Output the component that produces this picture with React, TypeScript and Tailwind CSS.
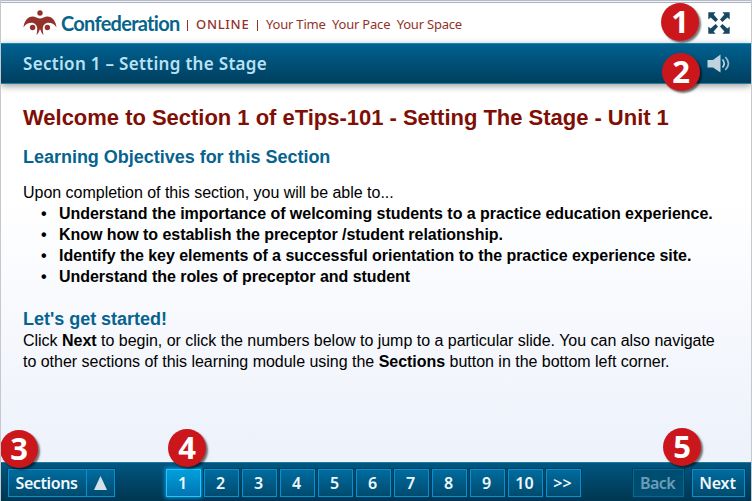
const pages = ["2", "3", "4", "5", "6", "7", "8", "9", "10", ">>"];

const objectives = [
  "Understand the importance of welcoming students to a practice education experience.",
  "Know how to establish the preceptor /student relationship.",
  "Identify the key elements of a successful orientation to the practice experience site.",
  "Understand the roles of preceptor and student",
];

const badges = [
  { label: "1", place: "left-[661px] top-[3px]" },
  { label: "2", place: "left-[662px] top-[53px]" },
  { label: "3", place: "left-0 top-[430px]" },
  { label: "4", place: "left-[168px] top-[429px]" },
  { label: "5", place: "left-[663px] top-[428px]" },
];

function Logo() {
  return (
    <svg width="34" height="26" viewBox="0 0 34 26" fill="#93322b" className="shrink-0">
      <circle cx="17" cy="3" r="2.7" />
      <circle cx="9.6" cy="17.500" r="2.7" />
      <circle cx="24.4" cy="17.500" r="2.7" />
      <path d="M0.5 17.5C1 11 5 6.5 9.500 6.500C12.500 6.500 14.500 8.500 17 8.500C19.500 8.500 21.500 6.500 24.500 6.500C29 6.500 33 11 33.500 17.500C31.500 14 28.500 12.800 25.500 12.800C22 12.800 20 15.500 19.800 18.500C19.600 21 20.200 23 20.500 25.200C18.800 23.500 18 21.500 17 19C16 21.500 15.200 23.500 13.500 25.200C13.800 23 14.400 21 14.200 18.500C14 15.500 12 12.800 8.500 12.800C5.500 12.800 2.500 14 0.500 17.500Z" />
    </svg>
  );
}

function ExpandIcon() {
  return (
    <svg width="22" height="22" viewBox="0 0 22 22" fill="#174863">
      {[0, 90, 180, 270].map((turn) => (
        <g key={turn} transform={`rotate(${turn} 11 11)`}>
          <path d="M0.300 0.300H7.600L5.600 2.600L10 7.600L7.600 10L2.600 5.600L0.300 7.600Z" />
        </g>
      ))}
    </svg>
  );
}

function SpeakerIcon() {
  return (
    <svg width="24" height="20" viewBox="0 0 24 20" fill="none">
      <path d="M0.500 6H6L13.500 0.500V18.500L6 13.500H0.500Z" fill="#bfd3df" />
      <path d="M15.500 5.500Q18.800 9.500 15.500 13.500" stroke="#bfd3df" strokeWidth="1.700" />
      <path d="M18.300 3Q24.600 9.500 18.300 16" stroke="#9fbccc" strokeWidth="1.700" />
    </svg>
  );
}

export default function App() {
  return (
    <div className="relative flex h-[501px] w-[752px] flex-col overflow-hidden border-x border-[#c6c8cc] bg-white font-['Liberation_Sans',sans-serif] text-black">
      <div className="h-[3px] shrink-0 border-y border-t-[#b5bccd] border-b-[#b0b1bd] bg-[#f2f3f8]" />

      {/* Brand row */}
      <header className="flex h-10 shrink-0 items-center justify-between pr-[21px] pl-[22px] font-['Noto_Sans',sans-serif]">
        <div className="flex items-center whitespace-nowrap text-[#93322b]">
          <Logo />
          <span className="ml-1 w-[119px] font-['Lato',sans-serif] text-[20px] font-bold tracking-[-0.72px] text-[#08658a]">Confederation</span>
          <span className="ml-[7px] mt-1 h-[11px] w-px bg-[#93322b]" />
          <span className="ml-[8px] mt-1 w-[54px] text-[13px] font-medium tracking-[0.7px]">ONLINE</span>
          <span className="ml-[7px] mt-1 h-[11px] w-px bg-[#93322b]" />
          <span className="ml-2 mt-1 text-[13px] tracking-[-0.2px]">Your Time&nbsp; Your Pace&nbsp; Your Space</span>
        </div>
        <ExpandIcon />
      </header>

      {/* Section title */}
      <div className="z-10 flex h-[41px] shrink-0 items-center justify-between border-y border-t-[#1787ad] border-b-[#2380a5] bg-linear-to-b from-[#006190] to-[#003f5f] pr-5 pl-[22px] shadow-[0_2px_7px_rgba(0,0,0,0.4)]">
        <h2 className="font-['Noto_Sans',sans-serif] text-[17px] font-semibold tracking-[0.31px] whitespace-nowrap text-[#b9e2f5]">Section 1 – Setting the Stage</h2>
        <SpeakerIcon />
      </div>

      <main className="flex-1 bg-linear-to-b from-white from-30% to-[#eef2fb] to-95% pt-[19px] pl-[22px] text-[16px] leading-[20.8px] tracking-[-0.02px] whitespace-nowrap">
        <h1 className="text-[22px] leading-[30px] font-bold text-[#7f0f05]">Welcome to Section 1 of eTips-101 - Setting The Stage - Unit 1</h1>
        <h3 className="mt-3 text-[18px] leading-6 font-bold text-[#06638f]">Learning Objectives for this Section</h3>
        <p className="mt-[14px]">Upon completion of this section, you will be able to...</p>
        <ul className="mt-[0.7px] font-bold tracking-[-0.04px]">
          {objectives.map((text) => (
            <li key={text} className="flex">
              <span className="w-9 pl-[18px]">•</span>
              {text}
            </li>
          ))}
        </ul>
        <h3 className="mt-[20.5px] text-[18px] leading-[22px] font-bold text-[#06638f]">Let's get started!</h3>
        <p className="mt-[1.3px]">
          Click <b>Next</b> to begin, or click the numbers below to jump to a particular slide. You can also navigate
          <br />
          to other sections of this learning module using the <b>Sections</b> button in the bottom left corner.
        </p>
      </main>

      {/* Slide navigation */}
      <footer className="flex h-[39px] shrink-0 items-start border-t border-[#23799c] bg-linear-to-b from-[#005680] to-[#003650] pt-1.5 pr-[6px] pl-[7px] font-['Noto_Sans',sans-serif] text-[16px] font-semibold text-[#f0f7fb] text-shadow-[1px_1px_1px_rgba(0,0,0,0.6)]">
        <button className="flex h-7 w-[107px] border border-[#0590d6] bg-linear-to-b from-[#006c9e] to-[#004b70] leading-[26px] shadow-[0_0_0_1px_#00405f]">
          <span className="w-[78px] border-r border-[#0590d6] pr-0.5 text-center tracking-[-0.4px]">Sections</span>
          <span className="flex flex-1 items-center justify-center">
            <svg width="13" height="14" viewBox="0 0 13 14">
              <path d="M6.500 0L13 14H0Z" fill="#d5e1e8" />
            </svg>
          </span>
        </button>
        <div className="ml-[51px] flex gap-[3px]">
          <button className="h-7 w-[35px] border border-[#25c4ff] bg-linear-to-b from-[#00a0dc] to-[#0075b2] pr-0.5 leading-[26px] shadow-[0_0_4px_1px_#009be0]">1</button>
          {pages.map((page) => (
            <button key={page} className="h-7 w-[35px] border border-[#0590d6] bg-linear-to-b from-[#006c9e] to-[#004b70] pr-0.5 leading-[26px] shadow-[0_0_0_1px_#00405f]">
              {page}
            </button>
          ))}
        </div>
        <button className="ml-auto h-7 w-[51px] border border-[#006999] bg-[#004d72] pr-0.5 leading-[26px] tracking-[-0.6px] text-[#6d9db6] shadow-[0_0_0_1px_#00405f]">Back</button>
        <button className="ml-2 h-7 w-[53px] border border-[#0590d6] bg-linear-to-b from-[#006c9e] to-[#004b70] pr-0.5 leading-[26px] tracking-[-0.2px] shadow-[0_0_0_1px_#00405f]">Next</button>
      </footer>

      {/* Numbered callouts */}
      {badges.map((badge) => (
        <div
          key={badge.label}
          className={`absolute z-20 -ml-px flex size-[38px] items-center justify-center rounded-full bg-[#cb171b] pb-px font-['Open_Sans',sans-serif] text-[31px] leading-none font-bold text-white shadow-[2px_2px_2px_rgba(0,0,0,0.55)] ${badge.place}`}
        >
          {badge.label}
        </div>
      ))}
    </div>
  );
}
